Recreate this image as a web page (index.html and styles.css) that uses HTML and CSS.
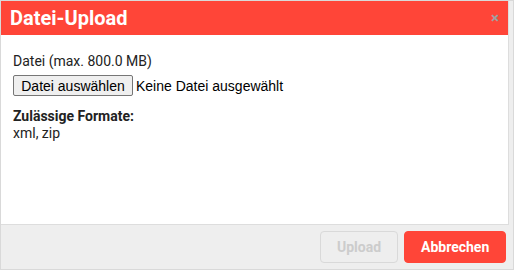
FILE: index.html
```html
<!DOCTYPE html>
<html lang="de">
<head>
<meta charset="utf-8">
<title>Datei-Upload</title>
<link rel="stylesheet" href="styles.css">
</head>
<body>
<div class="dialog">
  <div class="panel">
    <div class="header">
      <h1 class="title">Datei-Upload</h1>
      <span class="close">×</span>
    </div>
    <div class="content">
      <div class="label">Datei (max. 800.0 MB)</div>
      <label class="file">
        <input class="file-input" type="file">
        <span class="file-btn">Datei auswählen</span>
        <span class="file-name">Keine Datei ausgewählt</span>
      </label>
      <div class="formats-title">Zulässige Formate:</div>
      <div class="formats">xml, zip</div>
    </div>
  </div>
  <div class="footer">
    <button class="btn btn-disabled" disabled>Upload</button>
    <button class="btn btn-red">Abbrechen</button>
  </div>
</div>
</body>
</html>
```
FILE: styles.css
```css
html, body {
  margin: 0;
  padding: 0;
  background: #eeeeee;
}
.dialog {
  width: 514px;
  height: 270px;
  box-sizing: border-box;
  border: 1px solid #d9d9d9;
  background: #eeeeee;
  display: flex;
  flex-direction: column;
  font-family: Roboto, "Liberation Sans", sans-serif;
}
.panel {
  margin-right: 4px;
  border-right: 1px solid #dddddd;
  border-bottom: 1px solid #dddddd;
  background: #ffffff;
  height: 224px;
  box-sizing: border-box;
}
.header {
  background: #ff4538;
  height: 34px;
  display: flex;
  align-items: center;
  justify-content: space-between;
  padding: 0 9px 0 9px;
}
.title {
  margin: 0;
  color: #ffffff;
  font-size: 20px;
  font-weight: bold;
}
.close {
  color: #a0a0a0;
  font-weight: bold;
  font-size: 15px;
}
.content {
  padding: 18px 12px 0 12px;
  font-size: 14px;
  color: #222222;
}
.label {
  line-height: 17px;
}
.file {
  margin-top: 5px;
  display: flex;
  align-items: center;
  gap: 3px;
  font-family: "Liberation Sans", Arial, sans-serif;
  font-size: 14px;
  color: #000000;
}
.file-input {
  display: none;
}
.file-btn {
  box-sizing: border-box;
  height: 21px;
  width: 120px;
  display: flex;
  align-items: center;
  justify-content: center;
  background: #efefef;
  border: 1px solid #767676;
  border-radius: 2px;
  font-size: 14px;
}
.formats-title {
  margin-top: 12px;
  font-weight: bold;
  line-height: 17px;
}
.formats {
  line-height: 17px;
}
.footer {
  flex: 1;
  display: flex;
  justify-content: flex-end;
  align-items: center;
  gap: 6px;
  padding: 0 7px;
}
.btn {
  height: 32px;
  border-radius: 4px;
  font-family: Roboto, "Liberation Sans", sans-serif;
  font-weight: bold;
  font-size: 14px;
  padding: 0 16px;
}
.btn-disabled {
  background: #eeeeee;
  border: 1px solid #d9d9d9;
  color: #cccccc;
  width: 78px;
}
.btn-red {
  background: #ff4538;
  border: 1px solid #ff4538;
  color: #ffffff;
  width: 102px;
}
```
